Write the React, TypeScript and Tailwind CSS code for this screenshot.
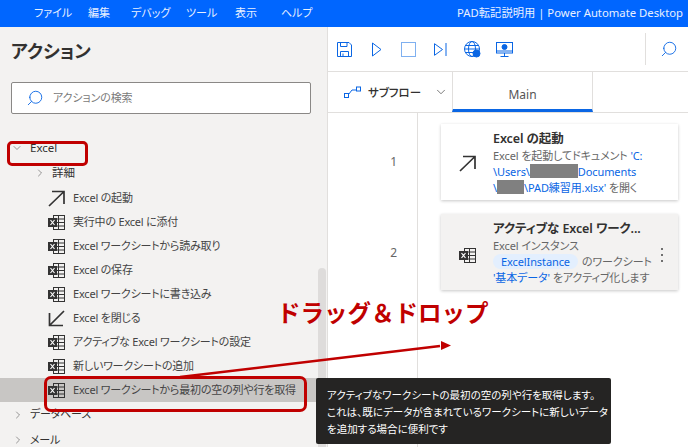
import React from "react";
import { ChevronRight, ChevronDown, Search } from "lucide-react";

function XlIcon({ className = "" }: { className?: string }) {
  return (
    <svg width="17" height="15" viewBox="0 0 17 15" className={className} fill="none">
      <rect x="5.5" y="0.5" width="11" height="14" fill="none" stroke="#333" />
      <path d="M5.5 4h11M5.5 7.5h11M5.5 11h11M10.5 .5v14" stroke="#333" />
      <rect x="0" y="3" width="9" height="9" fill="#333" />
      <path d="M2.5 5l4 5M6.5 5l-4 5" stroke="#fff" strokeWidth="1.2" />
    </svg>
  );
}

function ArrowNE() {
  return (
    <svg width="17" height="17" viewBox="0 0 17 17" fill="none" stroke="#333" strokeWidth="1.7">
      <path d="M1 16L16 1.500M4 1.500h12V14" />
    </svg>
  );
}

function ArrowSW() {
  return (
    <svg width="17" height="17" viewBox="0 0 17 17" fill="none" stroke="#333" strokeWidth="1.700">
      <path d="M16 1L1.500 15.500M1.500 3v12.500H15" />
    </svg>
  );
}

function ActionRow({ label, icon, active }: { label: string; icon: React.ReactNode; active?: boolean }) {
  return (
    <div className={`flex h-6 shrink-0 items-center pl-12 ${active ? "bg-[#c8c6c4]" : ""}`}>
      <span className="flex w-[25px] shrink-0 items-center">{icon}</span>
      <span className="pt-[1px] text-[11px] tracking-[-0.2px] whitespace-nowrap text-[#444]">{label}</span>
    </div>
  );
}

function Toolbar() {
  return (
    <div className="flex h-[45px] shrink-0 items-center border-b border-[#e1dfdd] pr-[10px] pl-[9px]">
      <svg width="15" height="15" viewBox="0 0 15 15" fill="none" stroke="#0a66e4">
        <path d="M.5.500h11.500l2.500 2.500v11.500H.5zM3.500.500v4h6.500v-4M3.500 14.500v-5h8v5M6 11.500v3" />
      </svg>
      <svg width="10" height="15" viewBox="0 0 10 15" fill="none" stroke="#0a66e4" className="ml-[20px]">
        <path d="M.5 1v13l8.500-6.500z" />
      </svg>
      <div className="ml-[19px] h-[15px] w-[15px] border-[1.5px] border-[#7fb0f0]" />
      <svg width="13" height="13" viewBox="0 0 13 13" fill="none" stroke="#0a66e4" className="ml-[18px]">
        <path d="M.5 .7v11.600l8-5.800zM12 0v13" />
      </svg>
      <svg width="17" height="17" viewBox="0 0 17 17" fill="none" stroke="#0a66e4" className="ml-[17px]">
        <circle cx="8" cy="8" r="7.500" />
        <ellipse cx="8" cy="8" rx="3.500" ry="7.500" />
        <path d="M.5 8h15M1.500 4.500h13M1.500 11.500h13" />
        <circle cx="12.500" cy="12.500" r="3.500" fill="#0a66e4" />
      </svg>
      <svg width="17" height="15" viewBox="0 0 17 15" fill="none" stroke="#0a66e4" className="ml-[15px]">
        <rect x=".5" y=".5" width="16" height="10.500" />
        <path d="M.5 9h16M8.500 11v3M4.500 14.500h8" />
        <circle cx="8.500" cy="5" r="2.500" fill="#0a66e4" />
      </svg>
      <div className="ml-auto flex h-8 items-center border-l border-[#e1dfdd] pl-[14px]">
        <Search size={18} strokeWidth={1.2} color="#0a66e4" className="-scale-x-100" />
      </div>
    </div>
  );
}

export default function App() {
  const xl = <XlIcon />;
  return (
    <div className="relative flex h-[447px] w-[688px] flex-col overflow-hidden bg-white [font-family:'Noto_Sans','Noto_Sans_CJK_JP',sans-serif] [font-feature-settings:'palt']">
      <header className="flex h-[27px] shrink-0 items-center bg-[#0066ff] text-[11px] whitespace-nowrap text-[#e8f0ff]">
        <nav className="flex pl-[34px]">
          <span className="w-[54px]">ファイル</span>
          <span className="w-[43px]">編集</span>
          <span className="w-[55px]">デバッグ</span>
          <span className="w-[49px]">ツール</span>
          <span className="w-[46px]">表示</span>
          <span>ヘルプ</span>
        </nav>
        <span className="ml-auto pr-[5px] text-[11.300px]">PAD転記説明用 | Power Automate Desktop</span>
      </header>
      <div className="flex min-h-0 flex-1">
        <aside className="relative flex w-[328px] shrink-0 flex-col overflow-hidden border-r border-[#e1dfdd] bg-[#f3f2f1]">
          <h1 className="mt-[11px] ml-[11px] shrink-0 text-[18px] leading-[27px] font-bold text-[#323130]">アクション</h1>
          <div className="mt-[17px] ml-[11px] flex h-[32px] w-[300px] shrink-0 items-center rounded-[2px] border border-[#8a8886] bg-white pl-[14px]">
            <Search size={18} strokeWidth={1.2} color="#0a66e4" className="-scale-x-100" />
            <span className="ml-[9px] text-[11px] tracking-[-0.1px] text-[#7a7a7a]">アクションの検索</span>
          </div>
          <div className="mt-[22px] flex shrink-0 flex-col">
            <div className="flex h-[23px] items-center pl-[11px] text-[11.500px] text-[#323130]">
              <ChevronDown size={12} strokeWidth={1.200} color="#555" />
              <span className="ml-[7px]">Excel</span>
            </div>
            <div className="flex h-[27px] items-center pl-[34px] text-[11.500px] text-[#323130]">
              <ChevronRight size={12} strokeWidth={1.200} color="#555" />
              <span className="ml-[6px]">詳細</span>
            </div>
            <ActionRow label="Excel の起動" icon={<ArrowNE />} />
            <ActionRow label="実行中の Excel に添付" icon={xl} />
            <ActionRow label="Excel ワークシートから読み取り" icon={xl} />
            <ActionRow label="Excel の保存" icon={xl} />
            <ActionRow label="Excel ワークシートに書き込み" icon={xl} />
            <ActionRow label="Excel を閉じる" icon={<ArrowSW />} />
            <ActionRow label="アクティブな Excel ワークシートの設定" icon={xl} />
            <ActionRow label="新しいワークシートの追加" icon={xl} />
            <ActionRow label="Excel ワークシートから最初の空の列や行を取得" icon={xl} active />
            <div className="flex h-[25px] items-center pl-[12px] text-[11px] tracking-[-0.2px] text-[#323130]">
              <ChevronRight size={12} strokeWidth={1.200} color="#555" />
              <span className="ml-[6px]">データベース</span>
            </div>
            <div className="flex h-[26px] items-center pl-[12px] text-[11px] tracking-[-0.2px] text-[#323130]">
              <ChevronRight size={12} strokeWidth={1.200} color="#555" />
              <span className="ml-[6px]">メール</span>
            </div>
          </div>
          <div className="absolute top-[241px] right-[1px] bottom-0 w-[8px] rounded-t bg-[#dedcdb]" />
        </aside>
        <main className="flex min-w-0 flex-1 flex-col">
          <Toolbar />
          <div className="flex h-[41px] shrink-0 border-b border-[#e1dfdd]">
            <div className="flex w-[124px] items-center pl-[16px] text-[11.500px] whitespace-nowrap text-[#323130]">
              <svg width="17" height="13" viewBox="0 0 17 13" fill="none" stroke="#0a66e4">
                <rect x=".5" y="7.500" width="4" height="4" />
                <rect x="12.500" y="1" width="4" height="4" />
                <path d="M4.500 8.500L8 4h4.500" />
              </svg>
              <span className="ml-[7px] pt-[2px] font-medium">サブフロー</span>
              <ChevronDown size={14} strokeWidth={1.200} color="#444" className="ml-[13px]" />
            </div>
            <div className="flex w-[141px] items-center justify-center border-x border-b-[3px] border-x-[#e1dfdd] border-b-[#0a66e4] pt-[8px] text-[12px] text-[#555]">Main</div>
          </div>
          <div className="flex min-h-0 flex-1">
            <div className="w-[90px] shrink-0 border-r border-[#e1dfdd] text-right text-[12px] text-[#666]">
              <div className="mt-[40px] pr-[20px]">1</div>
              <div className="mt-[73px] pr-[20px]">2</div>
            </div>
            <div className="flex flex-col gap-[14px] pt-[11px] pl-[23px]">
              <div className="flex h-[76px] w-[237px] bg-white pt-[6px] shadow-[0_1px_3px_rgba(0,0,0,0.22)]">
                <div className="flex w-[52px] shrink-0 items-center justify-center pb-[4px]"><ArrowNE /></div>
                <div className="text-[11px] leading-[16px] tracking-[-0.1px] text-[#666]">
                  <div className="mb-[1px] text-[12.500px] leading-[17px] font-semibold text-[#323130]">Excel の起動</div>
                  <div className="whitespace-nowrap">Excel を起動してドキュメント <span className="text-[#0a66e4]">'C:</span></div>
                  <div className="flex whitespace-nowrap text-[#0a66e4]">\Users\<span className="h-[14px] w-[48px] bg-[#808080]" />Documents</div>
                  <div className="flex whitespace-nowrap"><span className="text-[#0a66e4]">\</span><span className="h-[14px] w-[27px] bg-[#808080]" /><span className="text-[#0a66e4]">\PAD練習用.xlsx'</span>&nbsp;を開く</div>
                </div>
              </div>
              <div className="flex h-[76px] w-[237px] bg-[#f3f2f1] pt-[6px] shadow-[0_1px_3px_rgba(0,0,0,0.22)]">
                <div className="flex w-[52px] shrink-0 items-center justify-center"><XlIcon /></div>
                <div className="w-[153px] text-[11px] leading-[16px] tracking-[-0.1px] text-[#666]">
                  <div className="mb-[1px] text-[12.500px] leading-[17px] font-semibold whitespace-nowrap text-[#323130]">アクティブな Excel ワーク...</div>
                  <div>Excel インスタンス</div>
                  <div className="whitespace-nowrap"><span className="rounded-full bg-[#e3effe] px-2 text-[#0a66e4]">ExcelInstance</span><span className="ml-[4px]">のワークシート</span></div>
                  <div className="whitespace-nowrap"><span className="text-[#0a66e4]">'基本データ'</span> をアクティブ化します</div>
                </div>
                <div className="flex flex-1 flex-col items-center justify-center gap-[4px]">
                  <span className="h-[2px] w-[2px] rounded-full bg-[#444]" />
                  <span className="h-[2px] w-[2px] rounded-full bg-[#444]" />
                  <span className="h-[2px] w-[2px] rounded-full bg-[#444]" />
                </div>
              </div>
            </div>
          </div>
        </main>
      </div>

      <div className="absolute top-[141px] left-[7px] h-[25px] w-[81px] rounded-[5px] border-[3px] border-[#c00000]" />
      <div className="absolute top-[376px] left-[44px] h-[36px] w-[263px] rounded-[7px] border-[3px] border-[#c00000]" />
      <svg className="absolute top-0 left-0" width="688" height="447" fill="none">
        <path d="M180 377L440 346" stroke="#c00000" strokeWidth="2.500" />
        <path d="M451 345.500L441 341v9z" fill="#c00000" />
      </svg>
      <div className="absolute top-[295px] left-[277px] text-[23.500px] leading-[36px] font-bold whitespace-nowrap text-[#c00000] [font-feature-settings:normal]">ドラッグ＆ドロップ</div>
      <div className="absolute top-[378px] left-[316px] h-[66px] w-[295px] rounded-[2px] bg-[#252423] px-[11px] pt-[9px] text-[10.500px] leading-[17px] text-white">
        <div className="whitespace-nowrap">アクティブなワークシートの最初の空の列や行を取得します。</div>
        <div className="whitespace-nowrap">これは、既にデータが含まれているワークシートに新しいデータ</div>
        <div className="whitespace-nowrap">を追加する場合に便利です</div>
      </div>
    </div>
  );
}
